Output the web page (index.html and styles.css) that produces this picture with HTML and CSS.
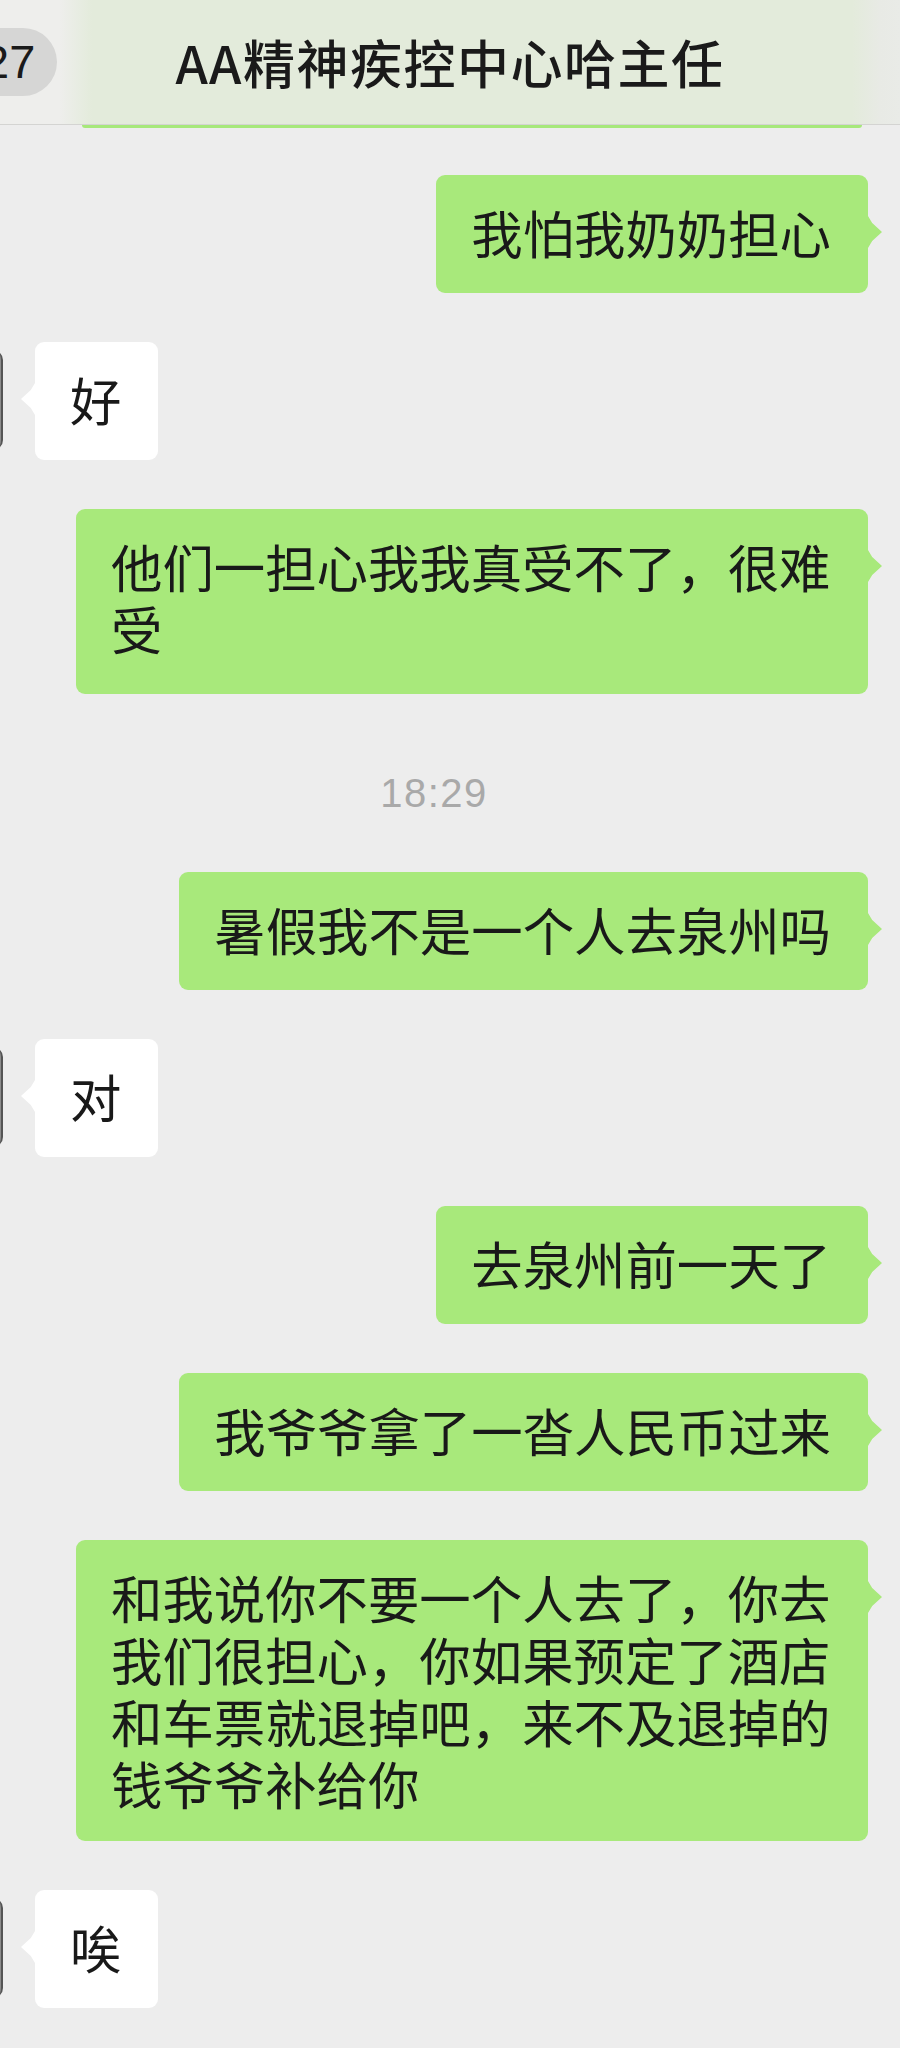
FILE: index.html
```html
<!DOCTYPE html>
<html lang="zh-CN">
<head>
    <meta charset="UTF-8">
    <meta name="viewport" content="width=device-width, initial-scale=1.0">
    <title>AA精神疾控中心哈主任</title>
    <link rel="stylesheet" href="styles.css">
</head>
<body>
    <div class="header">
        <div class="back"><span class="badge">27</span></div>
        <h1 class="title">AA精神疾控中心哈主任</h1>
        <div></div>
    </div>
    <div class="peek"></div>

    <div class="chat">
        <div class="row right first">
            <div class="bubble green">我怕我奶奶担心</div>
        </div>
        <div class="row left">
            <div class="avatar"></div>
            <div class="bubble white">好</div>
        </div>
        <div class="row right">
            <div class="bubble green two-line">他们一担心我我真受不了，很难受</div>
        </div>

        <div class="time">18:29</div>

        <div class="row right">
            <div class="bubble green">暑假我不是一个人去泉州吗</div>
        </div>
        <div class="row left">
            <div class="avatar"></div>
            <div class="bubble white">对</div>
        </div>
        <div class="row right">
            <div class="bubble green">去泉州前一天了</div>
        </div>
        <div class="row right">
            <div class="bubble green">我爷爷拿了一沓人民币过来</div>
        </div>
        <div class="row right">
            <div class="bubble green long">和我说你不要一个人去了，你去我们很担心，你如果预定了酒店和车票就退掉吧，来不及退掉的钱爷爷补给你</div>
        </div>
        <div class="row left">
            <div class="avatar"></div>
            <div class="bubble white">唉</div>
        </div>
    </div>
</body>
</html>
```

FILE: styles.css
```css
body {
    margin: 0;
    background: #ededed;
    font-family: "Noto Sans CJK SC", sans-serif;
    color: #191919;
    min-height: 2048px;
    overflow: hidden;
}
.header {
    height: 124px;
    border-bottom: 1px solid #d4d4d2;
    display: grid;
    grid-template-columns: 1fr auto 1fr;
    align-items: center;
    background: linear-gradient(90deg, #eeeeec 0, #eeeeec 60px, #e3ebdb 92px, #e3ebdb 852px, #e8eae5 880px, #e9ebe7 100%);
}
.back {
    justify-self: start;
}
.badge {
    display: inline-block;
    height: 68px;
    line-height: 68px;
    margin-left: -37px;
    padding: 0 22px 0 20px;
    border-radius: 34px;
    background: #d6d6d5;
    font-family: "Liberation Sans", sans-serif;
    font-size: 47px;
    color: #1a1a1a;
}
.title {
    margin: 0;
    font-size: 52px;
    font-weight: 500;
    letter-spacing: 1.5px;
    line-height: 1;
    color: #1a1a1a;
}
.peek {
    height: 3px;
    margin: 0 38px 0 82px;
    background: #a6e87a;
    border-radius: 0 0 4px 4px;
}
.chat {
    padding: 0 32px 60px 0;
}
.row {
    display: flex;
    align-items: flex-start;
    margin-top: 49px;
}
.row.first {
    margin-top: 47px;
}
.row.right {
    justify-content: flex-end;
}
.avatar {
    flex-shrink: 0;
    width: 100px;
    height: 100px;
    margin: 8px 0 0 -97px;
    border-radius: 10px;
    background: #8d8d8d;
    border-right: 2px solid #555;
    box-sizing: border-box;
}
.bubble {
    position: relative;
    box-sizing: border-box;
    max-width: 792px;
    padding: 26px 37px 30px 35px;
    font-size: 51.4px;
    line-height: 62px;
    border-radius: 9px;
}
.bubble.two-line {
    padding-bottom: 35px;
}
.bubble.long {
    padding-bottom: 27px;
}
.bubble::after {
    content: "";
    position: absolute;
    top: 41px;
    width: 14px;
    height: 32px;
    background: inherit;
}
.green {
    background: #a8e97b;
}
.green::after {
    right: -14px;
    clip-path: polygon(0 0, 30% 22%, 100% 50%, 30% 78%, 0 100%);
}
.white {
    background: #fff;
    margin-left: 32px;
}
.white::after {
    left: -14px;
    clip-path: polygon(100% 0, 70% 22%, 0 50%, 70% 78%, 100% 100%);
}
.time {
    margin-top: 49px;
    padding: 26px 0 6px;
    text-align: center;
    font-family: "Liberation Sans", sans-serif;
    font-size: 40px;
    line-height: 48px;
    letter-spacing: 1.5px;
    color: #a9a9a9;
}
```
